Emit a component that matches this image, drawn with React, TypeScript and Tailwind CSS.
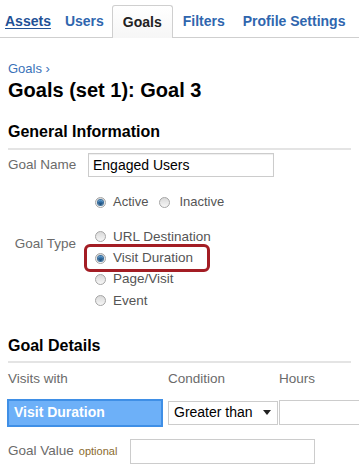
import React from "react";

const Radio = ({ checked }: { checked?: boolean }) => (
  <span className="relative inline-flex h-[11px] w-[11px] shrink-0 items-center justify-center rounded-full border border-[#a5a5a5] bg-gradient-to-b from-[#d9d9d9] to-[#f7f7f7]">
    {checked && (
      <span className="h-[5px] w-[5px] rounded-full bg-gradient-to-b from-[#4d94cf] to-[#123f6b] shadow-[0_0_0_1px_#3a6f9c]" />
    )}
  </span>
);

const RadioRow = ({ label, checked }: { label: string; checked?: boolean }) => (
  <div className="flex h-[21.4px] items-center gap-[7px] whitespace-nowrap text-[13.5px] text-[#555]">
    <Radio checked={checked} />
    <span>{label}</span>
  </div>
);

export default function App() {
  return (
    <div className="h-[468px] w-[359px] overflow-hidden bg-white font-['Liberation_Sans',Arial,sans-serif]">
      {/* tabs */}
      <div className="flex h-[38px] items-end border-b border-[#cfcfcf] pl-[5px] text-[14px] font-bold">
        <a className="flex h-[32px] items-center pt-px text-[#1f5196] underline underline-offset-2">Assets</a>
        <a className="ml-[14px] flex h-[32px] items-center pt-px text-[#2f66ae]">Users</a>
        <span className="-mb-px ml-[8px] flex h-[33px] items-center rounded-t-[3px] border border-b-0 border-[#cfcfcf] bg-gradient-to-b from-white to-[#f6f6f6] px-[10px] text-[#222]">
          Goals
        </span>
        <a className="ml-[10px] flex h-[32px] items-center pt-px text-[#2f66ae]">Filters</a>
        <a className="ml-[18px] flex h-[32px] items-center whitespace-nowrap pt-px text-[#2f66ae]">Profile Settings</a>
      </div>

      <div className="px-[8px]">
        <div className="mt-[23px] text-[13px] leading-[15px] text-[#3a72b8]">Goals ›</div>
        <h1 className="mt-[2px] text-[20px] font-bold leading-[24px] text-black">Goals (set 1): Goal 3</h1>

        <h2 className="mt-[20px] border-b-2 border-[#e4e4e4] pb-[6px] text-[16px] font-bold leading-[20px] text-black">
          General Information
        </h2>

        <div className="mt-[3px] flex items-center">
          <span className="w-[68px] shrink-0 whitespace-nowrap text-right text-[13.5px] text-[#6b6b6b]">Goal Name</span>
          <div className="ml-[12px] flex h-[24px] w-[186px] shrink-0 items-center border border-[#cccccc] px-[4px] text-[14px] text-black shadow-[inset_0_1px_1px_#eee]">
            Engaged Users
          </div>
        </div>

        <div className="ml-[87px] mt-[17px] flex h-[16px] items-center text-[13px] text-[#555]">
          <Radio checked />
          <span className="ml-[7px]">Active</span>
          <span className="ml-[11px] flex">
            <Radio />
          </span>
          <span className="ml-[9px]">Inactive</span>
        </div>

        <div className="mt-[16px] flex">
          <span className="mt-[8px] w-[68px] shrink-0 whitespace-nowrap text-right text-[13.5px] text-[#6b6b6b]">Goal Type</span>
          <div className="ml-[19px]">
            <RadioRow label="URL Destination" />
            <div className="relative">
              <RadioRow label="Visit Duration" checked />
              <span className="absolute left-[-11px] top-[-3px] h-[28px] w-[126px] rounded-[6px] border-[3px] border-[#a31d24]" />
            </div>
            <RadioRow label="Page/Visit" />
            <RadioRow label="Event" />
          </div>
        </div>

        <h2 className="mt-[24px] border-b-2 border-[#e4e4e4] pb-[5px] text-[16px] font-bold leading-[20px] text-black">
          Goal Details
        </h2>

        <div className="mt-[6px] grid grid-cols-[160px_111px_1fr] items-center text-[13.5px] text-[#6b6b6b]">
          <span>Visits with</span>
          <span>Condition</span>
          <span>Hours</span>
        </div>

        <div className="-mr-[12px] mt-[10px] grid grid-cols-[160px_111px_1fr] items-center">
          <div className="-ml-px flex h-[28px] w-[156px] items-center border-2 border-[#3f8fe6] bg-[#6db0f8] px-[5px] text-[14px] font-bold text-white">
            Visit Duration
          </div>
          <div className="flex h-[24px] w-[110px] items-center justify-between border border-[#cccccc] pl-[5px] pr-[6px] text-[14px] text-black">
            <span>Greater than</span>
            <svg width="8" height="5" viewBox="0 0 8 5">
              <path d="M0 0h8L4 5z" fill="#222" />
            </svg>
          </div>
          <div className="h-[25px] border border-[#cccccc]" />
        </div>

        <div className="mt-[12px] flex items-center">
          <span className="whitespace-nowrap text-[13.5px] text-[#6b6b6b]">Goal Value</span>
          <span className="ml-[5px] text-[11px] text-[#8a6b2e]">optional</span>
          <div className="ml-[13px] h-[25px] w-[185px] shrink-0 border border-[#cccccc]" />
        </div>
      </div>
    </div>
  );
}
